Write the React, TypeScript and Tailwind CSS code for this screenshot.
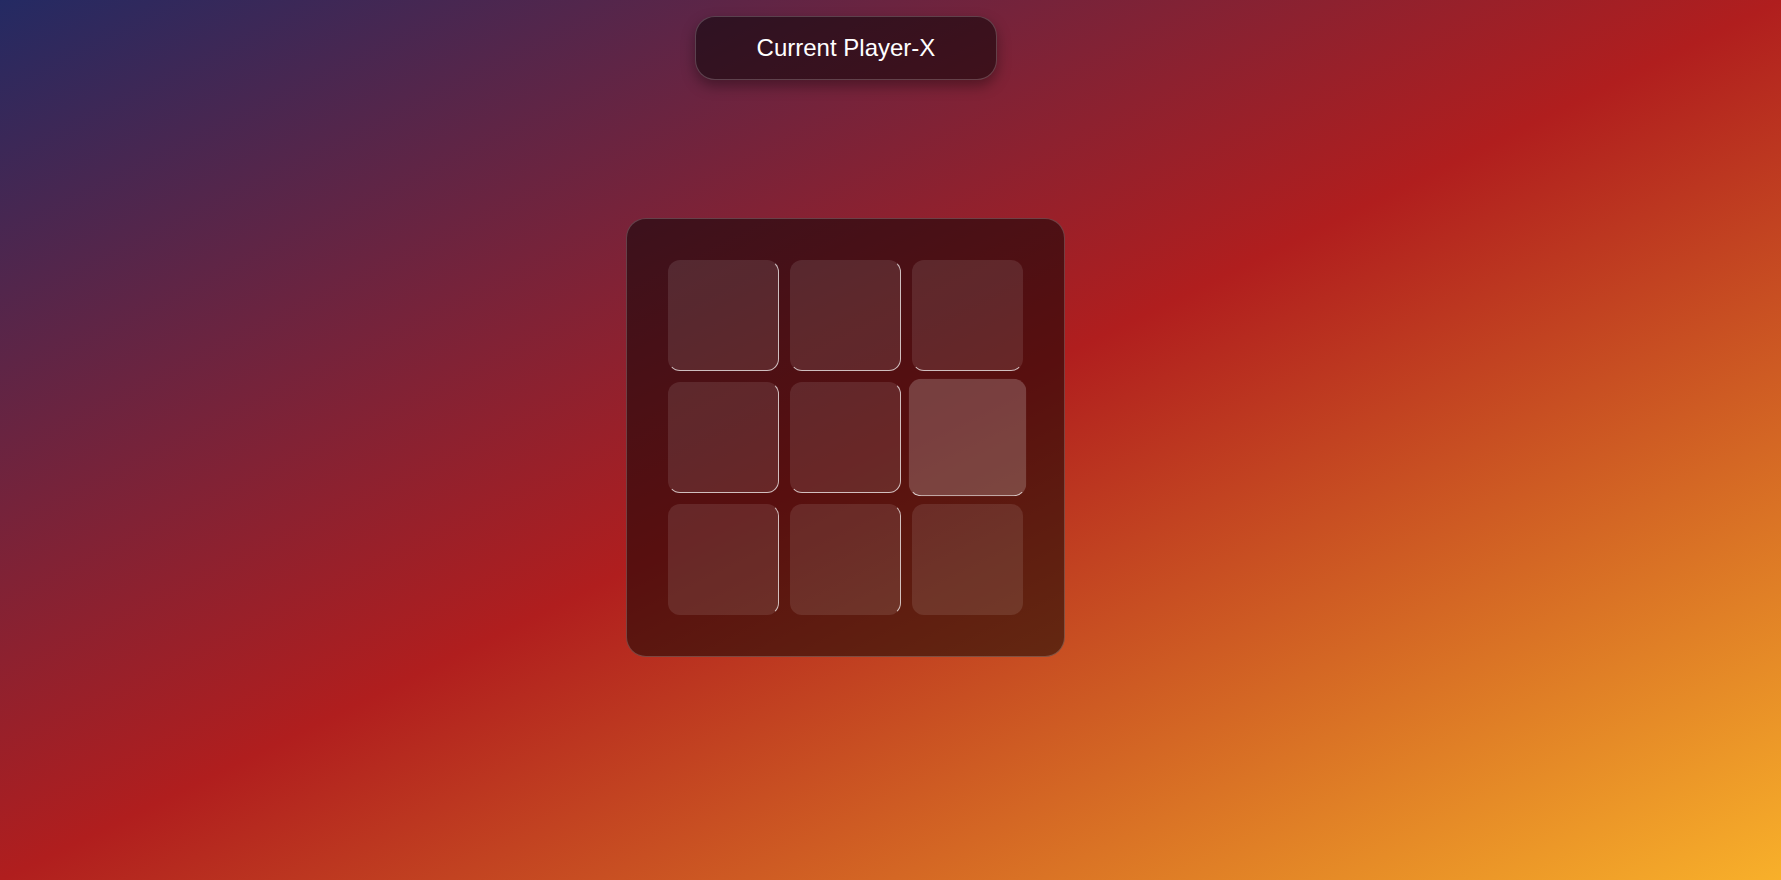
import { useState } from 'react'

const CELLS = [0, 1, 2, 3, 4, 5, 6, 7, 8]

// grid lines: right edge on first two columns, bottom edge on first two rows
function cellLines(i: number): string {
  const col = i % 3
  const row = Math.floor(i / 3)
  const r = col < 2 ? 'border-r-white/70' : 'border-r-transparent'
  const b = row < 2 ? 'border-b-white/70' : 'border-b-transparent'
  return `${r} ${b}`
}

export default function App() {
  const [hovered, setHovered] = useState<number | null>(5)
  const [board, setBoard] = useState<string[]>(Array(9).fill(''))
  const [player, setPlayer] = useState<'X' | 'O'>('X')

  function play(i: number) {
    if (board[i]) return
    const next = [...board]
    next[i] = player
    setBoard(next)
    setPlayer(player === 'X' ? 'O' : 'X')
  }

  return (
    <div
      className="min-h-screen w-full bg-[linear-gradient(to_bottom_right,#242a63_0%,#b01e1e_50%,#f8b02a_100%)]"
      style={{ fontFamily: '"Liberation Sans", Arial, sans-serif' }}
    >
      <main className="w-[95%] flex flex-col items-center pt-4">
        {/* Header */}
        <div className="rounded-[20px] border border-white/20 bg-black/50 px-[61px] py-[17px] text-2xl leading-[28px] text-white shadow-[0_6px_14px_rgba(0,0,0,0.35)]">
          Current Player-{player}
        </div>

        {/* Board */}
        <div className="mt-[138px] rounded-[20px] border border-white/20 bg-black/50 p-[41px]">
          <div className="grid grid-cols-[repeat(3,111px)] gap-[11px]">
            {CELLS.map(i => (
              <button
                key={i}
                onMouseEnter={() => setHovered(i)}
                onMouseLeave={() => setHovered(null)}
                onClick={() => play(i)}
                className={`h-[111px] w-[111px] rounded-xl border border-t-transparent border-l-transparent text-5xl text-white transition-transform ${cellLines(i)} ${
                  hovered === i ? 'scale-[1.06] bg-white/20' : 'bg-white/10'
                }`}
              >
                {board[i]}
              </button>
            ))}
          </div>
        </div>
      </main>
    </div>
  )
}
